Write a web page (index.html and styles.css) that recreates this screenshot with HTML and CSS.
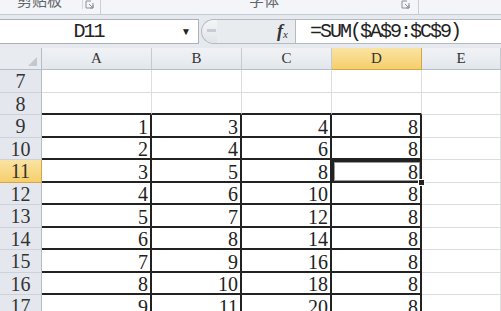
FILE: index.html
```html
<!DOCTYPE html>
<html lang="en">
<head>
  <meta charset="UTF-8" />
  <title>Sheet</title>
  <link rel="stylesheet" href="styles.css">
</head>
<body>
  <div class="ribbon">
    <div class="group group-clip">
      <span class="group-label">剪贴板</span>
      <svg class="launcher" width="9" height="9" viewBox="0 0 9 9"><path d="M1 1h5M1 1v7h7V3M4 4l4 4M8 5v3H5" fill="none" stroke="#8b9099" stroke-width="1"/></svg>
    </div>
    <div class="group group-font">
      <span class="group-label">字体</span>
      <svg class="launcher" width="9" height="9" viewBox="0 0 9 9"><path d="M1 1h5M1 1v7h7V3M4 4l4 4M8 5v3H5" fill="none" stroke="#8b9099" stroke-width="1"/></svg>
    </div>
  </div>

  <div class="formula-bar">
    <div class="name-box">
      <span class="name">D11</span>
      <span class="drop">&#9660;</span>
    </div>
    <div class="splitter"><span class="grip"></span></div>
    <div class="fx"><i>f</i><span class="fx-x">x</span></div>
    <div class="formula">=SUM($A$9:$C$9)</div>
  </div>

  <div class="sheet" id="sheet"></div>

  <script>
    // Row number followed by values for A-D
    const rows = [
      [7], [8],
      [9, 1, 3, 4, 8],
      [10, 2, 4, 6, 8],
      [11, 3, 5, 8, 8],
      [12, 4, 6, 10, 8],
      [13, 5, 7, 12, 8],
      [14, 6, 8, 14, 8],
      [15, 7, 9, 16, 8],
      [16, 8, 10, 18, 8],
      [17, 9, 11, 20, 8]
    ];
    const cols = ['A', 'B', 'C', 'D', 'E'];
    const sheet = document.getElementById('sheet');

    function add(cls, text) {
      const el = document.createElement('div');
      el.className = cls;
      if (text !== undefined) el.textContent = text;
      sheet.appendChild(el);
      return el;
    }

    // Column headers
    add('corner').innerHTML = '<span class="corner-tri"></span>';
    cols.forEach(c => add(c === 'D' ? 'ch sel' : 'ch', c));

    // Body rows
    rows.forEach(r => {
      const num = r[0];
      add(num === 11 ? 'rh sel' : 'rh', num);
      cols.forEach((c, i) => {
        let cls = 'c';
        if (num === 8 && i < 4) cls += ' top';
        if (num >= 9 && i < 4) cls += ' b';
        if (num === 11 && c === 'D') cls += ' active';
        const cell = add(cls, r[i + 1]);
        if (cls.includes('active')) {
          const handle = document.createElement('span');
          handle.className = 'fill-handle';
          cell.appendChild(handle);
        }
      });
    });
  </script>
</body>
</html>
```

FILE: styles.css
```css
/* Reset & basic styling */
* {
  box-sizing: border-box;
  margin: 0;
  padding: 0;
}
body {
  width: 501px;
  height: 311px;
  overflow: hidden;
  background: #e6e9ee;
  font-family: 'Liberation Serif', 'DejaVu Serif', serif;
  color: #222;
}

/* Ribbon group labels (cut off at top, as in the screenshot) */
.ribbon {
  height: 15px;
  display: flex;
  background: #f3f5f8;
  border-bottom: 1px solid #c4cad3;
  overflow: hidden;
}
.group {
  position: relative;
  display: flex;
  border-right: 1px solid #c9ced6;
}
.group-clip {
  width: 101px;
}
.group-font {
  width: 318px;
}
.group-label {
  font-family: 'Noto Sans CJK SC', sans-serif;
  font-size: 15px;
  line-height: 15px;
  margin-top: -8px;
  color: #60656c;
}
.group-clip .group-label {
  margin-left: 17px;
}
.group-font .group-label {
  margin-left: 148px;
}
.launcher {
  position: absolute;
  right: 8px;
  top: 0;
}
.group-clip .launcher {
  border-left: 1px solid #d3d7dd;
  right: 6px;
  width: 12px;
  padding-left: 2px;
}

/* Formula bar */
.formula-bar {
  display: flex;
  padding: 4px 0;
  height: 33px;
  background: #e6e9ee;
}
.name-box {
  width: 199px;
  height: 25px;
  display: flex;
  align-items: center;
  background: #fff;
  border: 1px solid #a9b1bc;
  border-left: none;
}
.name {
  flex: 1;
  text-align: center;
  font-family: 'Liberation Mono', monospace;
  font-size: 20px;
  letter-spacing: -2px;
  padding-right: 4px;
}
.drop {
  font-size: 10px;
  color: #222;
  margin-right: 7px;
}
.splitter {
  width: 16px;
  height: 25px;
  margin-left: 2px;
  border: 1px solid #b4bac3;
  border-right: none;
  border-radius: 13px 0 0 13px;
  background: linear-gradient(#f4f5f7, #e1e4e8);
  position: relative;
}
.grip {
  position: absolute;
  left: 5px;
  top: 9px;
  width: 9px;
  height: 3px;
  background: #c9cdd3;
}
.fx {
  width: 78px;
  height: 25px;
  display: flex;
  align-items: center;
  justify-content: flex-end;
  padding-right: 7px;
  background: #e9ecef;
  border-top: 1px solid #b4bac3;
  border-bottom: 1px solid #b4bac3;
  color: #333;
}
.fx i {
  font-size: 18px;
  font-weight: bold;
}
.fx-x {
  font-size: 11px;
  font-style: italic;
  margin-top: 4px;
}
.formula {
  flex: 1;
  height: 25px;
  background: #fff;
  border: 1px solid #b4bac3;
  border-right: none;
  padding-left: 14px;
  font-family: 'Liberation Mono', monospace;
  font-size: 20px;
  line-height: 23px;
  letter-spacing: -2px;
}

/* Sheet grid */
.sheet {
  display: grid;
  grid-template-columns: 42px 110px 90px 90px 90px 79px;
  grid-template-rows: 22px;
  grid-auto-rows: 22.5px;
  background: #fff;
}
.corner {
  position: relative;
  background: #e8ebef;
  border-right: 1px solid #b5bdc8;
  border-bottom: 1px solid #b5bdc8;
}
.corner-tri {
  position: absolute;
  right: 4px;
  bottom: 3px;
  width: 0;
  height: 0;
  border-left: 9px solid transparent;
  border-bottom: 9px solid #c3c8cf;
}
.ch {
  background: linear-gradient(#f0f2f5, #e3e7ec);
  border-right: 1px solid #c5cbd3;
  border-bottom: 1px solid #b5bdc8;
  text-align: center;
  font-size: 15px;
  line-height: 21px;
  color: #333;
}
.ch.sel {
  background: linear-gradient(#fae3a3, #f5cf6c);
  border-right-color: #d9a542;
  border-bottom-color: #d9a542;
}
.rh {
  background: #e4e8ee;
  border-right: 1px solid #b5bdc8;
  border-bottom: 1px solid #cdd2d9;
  text-align: center;
  font-size: 20px;
  line-height: 22px;
  color: #333;
}
.rh.sel {
  background: linear-gradient(#fae3a3, #f5cf6c);
  border-bottom-color: #d9a542;
  border-right-color: #d9a542;
}
.c {
  position: relative;
  display: flex;
  justify-content: flex-end;
  align-items: flex-end;
  padding-right: 2px;
  border-right: 1px solid #dadcdf;
  border-bottom: 1px solid #dadcdf;
  font-size: 20px;
  line-height: 17px;
}
.c.top {
  border-bottom: 2px solid #222;
}
.c.b {
  border-right: 2px solid #222;
  border-bottom: 2px solid #222;
}
.c.active {
  box-shadow: inset 2px 2px 0 #222, inset 3px 3px 0 #9a9a9a, inset -1px -1px 0 #9a9a9a;
}
.fill-handle {
  position: absolute;
  right: -5px;
  bottom: -5px;
  width: 7px;
  height: 7px;
  background: #222;
  border: 1px solid #fff;
  z-index: 2;
}
```
